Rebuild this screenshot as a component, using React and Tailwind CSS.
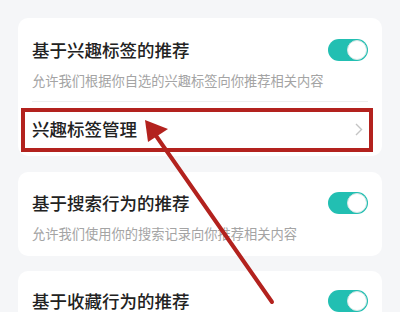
const font = { fontFamily: '"Noto Sans CJK SC", "Noto Sans", sans-serif' };

const Toggle = () => (
  <div className="w-[40px] h-[22px] rounded-full bg-[#22bfb2] flex items-center justify-end pr-[1px]">
    <div className="w-[20px] h-[20px] rounded-full bg-white border border-[#d4e6e4]" />
  </div>
);

const SettingHead = ({ title, desc }) => (
  <>
    <div className="flex items-center justify-between h-[24px]">
      <p className="text-[17.5px] leading-[24px] font-medium text-[#222]">{title}</p>
      <Toggle />
    </div>
    <p className="mt-[9px] text-[13.25px] leading-[20px] text-[#a4a4a4]">{desc}</p>
  </>
);

export default function App() {
  return (
    <div
      className="relative w-[400px] h-[312px] overflow-hidden bg-[#f5f6f8] px-[18px] pt-[18px]"
      style={font}
    >
      <div className="bg-white rounded-[10px] px-[14px] pt-[20px]">
        <SettingHead
          title="基于兴趣标签的推荐"
          desc="允许我们根据你自选的兴趣标签向你推荐相关内容"
        />
        <div className="mt-[10px] border-t border-[#eeeeee]" />
        <div className="h-[54px] flex items-center justify-between">
          <p className="text-[17.5px] leading-[24px] font-medium text-[#222]">兴趣标签管理</p>
          <svg width="8" height="13" viewBox="0 0 8 13" className="mr-[5px]">
            <path d="M1 1l5.5 5.5L1 12" fill="none" stroke="#c4c4c4" strokeWidth="1.4" />
          </svg>
        </div>
      </div>

      <div className="mt-[16px] bg-white rounded-[10px] px-[14px] pt-[19px] pb-[12px]">
        <SettingHead
          title="基于搜索行为的推荐"
          desc="允许我们使用你的搜索记录向你推荐相关内容"
        />
      </div>

      <div className="mt-[15px] bg-white rounded-[10px] px-[14px] pt-[18px] pb-[12px]">
        <SettingHead
          title="基于收藏行为的推荐"
          desc="允许我们使用你的收藏记录向你推荐相关内容"
        />
      </div>

      {/* annotation */}
      <div className="absolute left-[21px] top-[108px] w-[352px] h-[44px] border-4 border-[#b3221e]" />
      <svg className="absolute left-0 top-0" width="400" height="312" viewBox="0 0 400 312">
        <line x1="152" y1="130" x2="272" y2="302" stroke="#b3221e" strokeWidth="4" strokeLinecap="round" />
        <path d="M145 120 L148 142 L168 129 Z" fill="#b3221e" />
      </svg>
    </div>
  );
}
